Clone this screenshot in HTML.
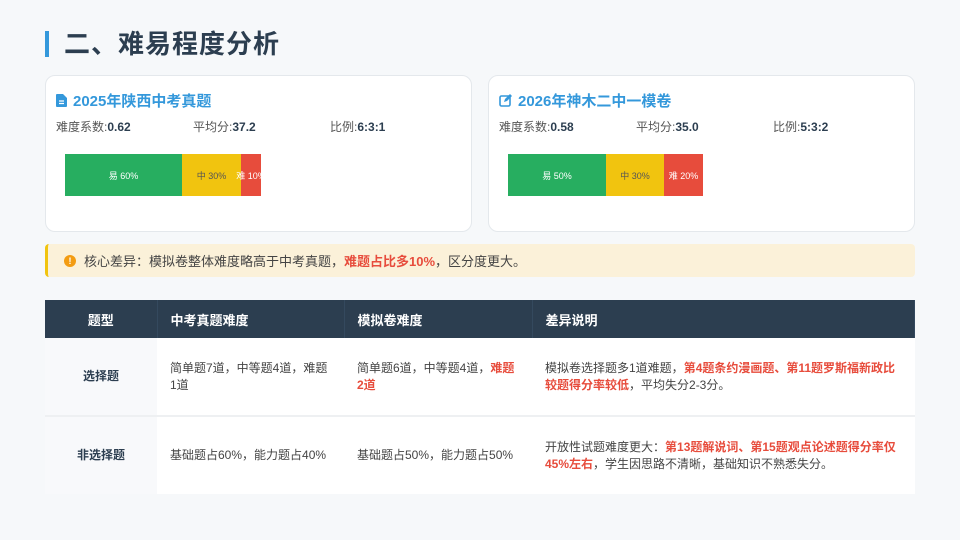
<!DOCTYPE html>
<html><head><meta charset="utf-8"><style>
*{margin:0;padding:0;box-sizing:border-box}
body{width:960px;height:540px;background:#f6f8fa;font-family:"Liberation Sans","Noto Sans CJK SC",sans-serif;position:relative;overflow:hidden;color:#333}
.bar{position:absolute;left:45px;top:31px;width:4px;height:26px;background:#3498db}
h1{position:absolute;left:64px;top:24px;font-size:26px;font-weight:bold;color:#2c3e50;letter-spacing:1px}
.card{position:absolute;top:75px;width:427px;height:157px;background:#fff;border:1px solid #e4e8ec;border-radius:10px}
.ct{position:absolute;left:10px;top:14px;font-size:15px;font-weight:bold;color:#3498db;display:flex;align-items:center;gap:6px}
.st{position:absolute;top:42px;font-size:12px;color:#555}
.st b{color:#2c3e50}
.pb{position:absolute;left:19px;top:78px;height:42px;display:flex;font-size:9px}
.pb div{display:flex;align-items:center;justify-content:center;white-space:nowrap}
.alert{position:absolute;left:45px;top:244px;width:870px;height:33px;background:#fbf1d9;border-left:3px solid #f1c40f;border-radius:4px;font-size:13px;color:#444;display:flex;align-items:center;padding-left:16px}
.alert .i{width:12px;height:12px;border-radius:50%;background:#f39c12;color:#fff;font-size:9px;font-weight:bold;display:flex;align-items:center;justify-content:center;margin-right:8px}
.r{color:#e74c3c;font-weight:bold}
table{position:absolute;left:45px;top:300px;width:870px;border-collapse:collapse;font-size:12px}
th{background:#2c3e50;color:#fff;height:38px;text-align:left;padding-left:13px;font-size:13px;border-right:1px solid #34495e}
th:first-child{text-align:center;padding:0}
td{background:#fff;height:78px;padding:0 13px;color:#444;line-height:17px;vertical-align:middle}
td:first-child{background:#f8f9fb;text-align:center;font-weight:bold;color:#2c3e50}
tr.a td{border-bottom:2px solid #eef0f2}
</style></head><body>
<div class="bar"></div><h1>二、难易程度分析</h1>
<div class="card" style="left:45px">
 <div class="ct"><svg width="11" height="13" viewBox="0 0 11 13"><path d="M0 1a1 1 0 011-1h6l4 4v8a1 1 0 01-1 1H1a1 1 0 01-1-1z" fill="#3498db"/><path d="M3 7h5M3 9.5h5" stroke="#fff" stroke-width="1.2"/></svg>2025年陕西中考真题</div>
 <div class="st" style="left:10px">难度系数:<b>0.62</b></div>
 <div class="st" style="left:147px">平均分:<b>37.2</b></div>
 <div class="st" style="left:284px">比例:<b>6:3:1</b></div>
 <div class="pb"><div style="width:117px;background:#27ae60;color:#fff">易 60%</div><div style="width:59px;background:#f1c40f;color:#555">中 30%</div><div style="width:20px;background:#e74c3c;color:#fff">难 10%</div></div>
</div>
<div class="card" style="left:488px">
 <div class="ct"><svg width="13" height="13" viewBox="0 0 13 13"><rect x="1" y="2" width="10" height="10" rx="1.5" fill="none" stroke="#3498db" stroke-width="1.6"/><path d="M5 8l1-3 5-5 2 2-5 5z" fill="#3498db"/></svg>2026年神木二中一模卷</div>
 <div class="st" style="left:10px">难度系数:<b>0.58</b></div>
 <div class="st" style="left:147px">平均分:<b>35.0</b></div>
 <div class="st" style="left:284px">比例:<b>5:3:2</b></div>
 <div class="pb"><div style="width:98px;background:#27ae60;color:#fff">易 50%</div><div style="width:58px;background:#f1c40f;color:#555">中 30%</div><div style="width:39px;background:#e74c3c;color:#fff">难 20%</div></div>
</div>
<div class="alert"><span class="i">!</span>核心差异：模拟卷整体难度略高于中考真题，<span class="r">难题占比多10%</span>，区分度更大。</div>
<table>
<tr><th style="width:112px">题型</th><th style="width:187px">中考真题难度</th><th style="width:188px">模拟卷难度</th><th>差异说明</th></tr>
<tr class="a"><td>选择题</td><td>简单题7道，中等题4道，难题1道</td><td>简单题6道，中等题4道，<span class="r">难题2道</span></td><td>模拟卷选择题多1道难题，<span class="r">第4题条约漫画题、第11题罗斯福新政比较题得分率较低</span>，平均失分2-3分。</td></tr>
<tr><td>非选择题</td><td>基础题占60%，能力题占40%</td><td>基础题占50%，能力题占50%</td><td>开放性试题难度更大：<span class="r">第13题解说词、第15题观点论述题得分率仅45%左右</span>，学生因思路不清晰，基础知识不熟悉失分。</td></tr>
</table>
</body></html>
